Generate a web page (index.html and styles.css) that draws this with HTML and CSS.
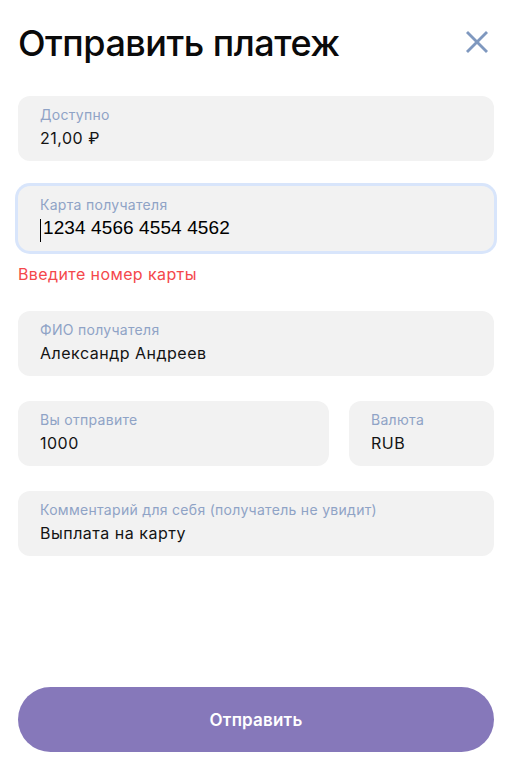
FILE: index.html
```html
<!DOCTYPE html>
<html lang="ru">
<head>
<meta charset="utf-8">
<title>Отправить платеж</title>
<link rel="stylesheet" href="styles.css">
</head>
<body>
<div class="page">
  <header class="header">
    <h1 class="title">Отправить платеж</h1>
    <button class="close" aria-label="Закрыть">
      <svg width="24" height="24" viewBox="0 0 24 24" fill="none" stroke="#7f98bf" stroke-width="2.8">
        <line x1="2" y1="2" x2="22" y2="22"/>
        <line x1="22" y1="2" x2="2" y2="22"/>
      </svg>
    </button>
  </header>

  <div class="form">
    <div class="field">
      <div class="label">Доступно</div>
      <div class="value">21,00 ₽</div>
    </div>

    <div class="group">
      <div class="field field-focus">
        <div class="label">Карта получателя</div>
        <div class="value value-input"><span class="caret"></span><span>1234 4566 4554 4562</span></div>
      </div>
      <div class="error">Введите номер карты</div>
    </div>

    <div class="field">
      <div class="label">ФИО получателя</div>
      <div class="value">Александр Андреев</div>
    </div>

    <div class="row">
      <div class="field">
        <div class="label">Вы отправите</div>
        <div class="value">1000</div>
      </div>
      <div class="field">
        <div class="label">Валюта</div>
        <div class="value">RUB</div>
      </div>
    </div>

    <div class="field">
      <div class="label">Комментарий для себя (получатель не увидит)</div>
      <div class="value">Выплата на карту</div>
    </div>
  </div>

  <button class="submit">Отправить</button>
</div>
</body>
</html>
```

FILE: styles.css
```css
* { box-sizing: border-box; }

html, body {
  margin: 0;
  padding: 0;
  background: #ffffff;
}

body {
  font-family: Inter, "Noto Sans", sans-serif;
  color: #111111;
}

.page {
  min-height: 100vh;
  display: flex;
  flex-direction: column;
  padding: 21px 21px 28px 18px;
}

.header {
  display: flex;
  justify-content: space-between;
  align-items: flex-start;
}

.title {
  margin: 0;
  font-size: 36px;
  line-height: 44px;
  font-weight: 500;
  color: #0a0a0a;
  letter-spacing: -0.5px;
}

.close {
  border: 0;
  background: none;
  padding: 0;
  margin: 9px 5px 0 0;
  width: 24px;
  height: 24px;
  display: block;
}

.close svg { display: block; }

.form {
  margin-top: 31px;
  display: flex;
  flex-direction: column;
  gap: 25px;
}

.field {
  background: #f2f2f2;
  border-radius: 12px;
  height: 65px;
  padding: 10px 22px 0;
}

.field-focus {
  box-shadow: 0 0 0 3px #d8e5fb;
}

.label {
  font-size: 14px;
  line-height: 18px;
  color: #8fa3c6;
  letter-spacing: 0.3px;
}

.value {
  margin-top: 3px;
  font-size: 16px;
  line-height: 22px;
  color: #141414;
  letter-spacing: 0.5px;
}

.value-input {
  display: flex;
  align-items: center;
  height: 22px;
  font-family: "Liberation Sans", Arial, sans-serif;
  font-size: 19px;
  color: #000;
  letter-spacing: 0.1px;
}

.caret {
  display: block;
  width: 1px;
  height: 23px;
  background: #000;
  margin-right: 2px;
  margin-top: 4px;
}

.error {
  margin-top: 11px;
  font-size: 16px;
  line-height: 24px;
  color: #f4484b;
  letter-spacing: 0.4px;
}

.row {
  display: grid;
  grid-template-columns: 1fr 145px;
  gap: 20px;
}

.submit {
  margin-top: auto;
  height: 65px;
  border: 0;
  border-radius: 33px;
  background: #8678ba;
  color: #ffffff;
  font-family: Inter, "Noto Sans", sans-serif;
  font-size: 17px;
  font-weight: 600;
  letter-spacing: 0.2px;
  width: 100%;
}
```
